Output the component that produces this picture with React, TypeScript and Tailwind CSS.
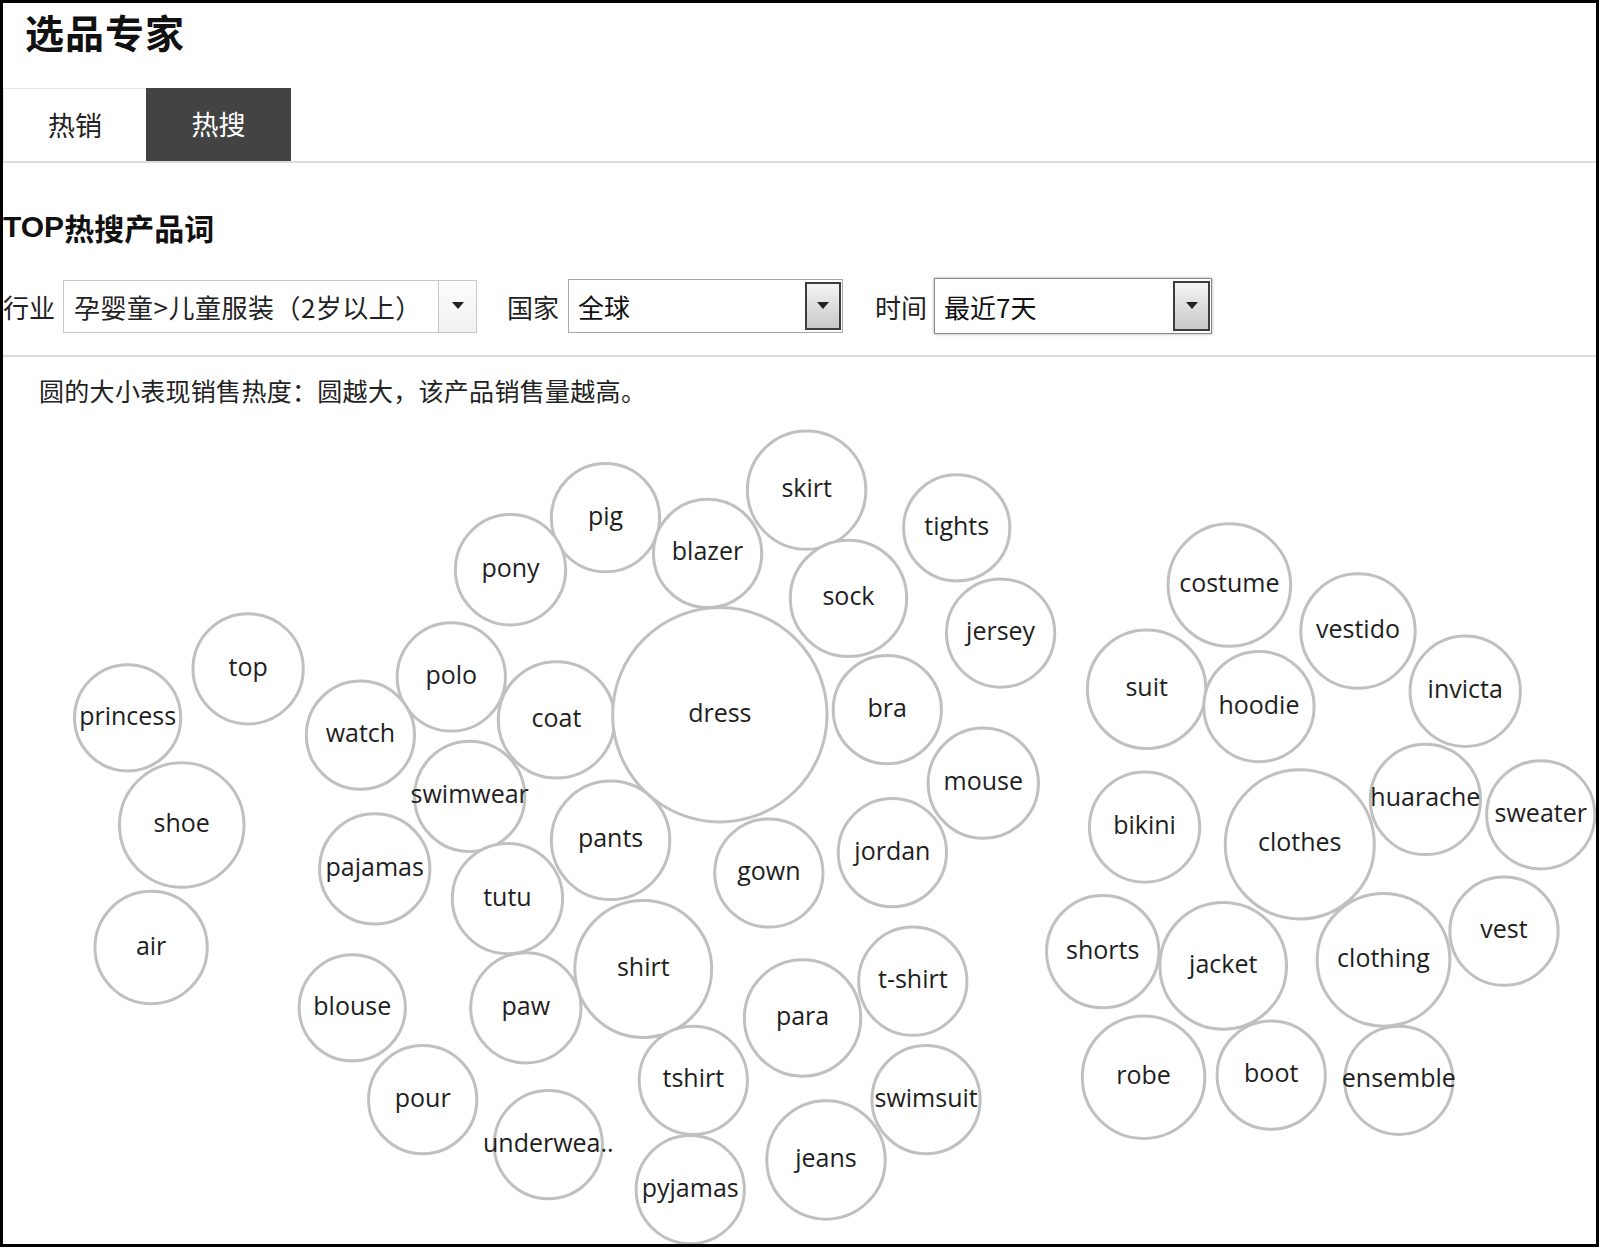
import React from "react";

const S = 1601 / 1568;

const bubbles: [string, number, number, number][] = [
  ["skirt", 790, 480, 58],
  ["tights", 937, 517, 52],
  ["pig", 593, 507, 53],
  ["blazer", 693, 542, 53],
  ["pony", 500, 558, 54],
  ["sock", 831, 586, 57],
  ["jersey", 980, 620, 53],
  ["costume", 1204, 573, 60],
  ["vestido", 1330, 618, 56],
  ["invicta", 1435, 677, 54],
  ["top", 243, 655, 54],
  ["princess", 125, 703, 52],
  ["polo", 442, 663, 53],
  ["watch", 353, 720, 53],
  ["coat", 545, 705, 57],
  ["dress", 705, 700, 105],
  ["bra", 869, 695, 53],
  ["suit", 1123, 675, 58],
  ["hoodie", 1233, 692, 54],
  ["mouse", 963, 767, 54],
  ["swimwear", 460, 780, 54],
  ["shoe", 178, 808, 61],
  ["pants", 598, 823, 58],
  ["gown", 753, 855, 53],
  ["jordan", 874, 835, 53],
  ["bikini", 1121, 810, 54],
  ["clothes", 1273, 827, 73],
  ["huarache", 1396, 783, 54],
  ["sweater", 1509, 798, 53],
  ["pajamas", 367, 851, 54],
  ["tutu", 497, 880, 54],
  ["air", 148, 928, 55],
  ["shirt", 630, 949, 67],
  ["t-shirt", 894, 961, 53],
  ["vest", 1473, 912, 53],
  ["shorts", 1080, 932, 55],
  ["jacket", 1198, 946, 62],
  ["clothing", 1355, 940, 65],
  ["blouse", 345, 987, 52],
  ["paw", 515, 987, 54],
  ["para", 786, 997, 57],
  ["pour", 414, 1077, 53],
  ["tshirt", 679, 1058, 53],
  ["swimsuit", 907, 1077, 53],
  ["robe", 1120, 1055, 60],
  ["boot", 1245, 1053, 53],
  ["ensemble", 1370, 1058, 53],
  ["underwea..", 537, 1121, 53],
  ["jeans", 809, 1136, 58],
  ["pyjamas", 676, 1165, 53],
];

const cjk = "font-['Noto_Sans_CJK_SC','Noto_Sans',sans-serif]";

function Arrow() {
  return (
    <svg width="12" height="8" viewBox="0 0 12 8">
      <path d="M0 0 L12 0 L6 7 Z" fill="#222" />
    </svg>
  );
}

export default function App() {
  return (
    <div className="w-[1601px] h-[1249px] bg-white">
      <div
        className={`w-[1599px] h-[1247px] border-[3px] border-black bg-white overflow-hidden text-[#222] ${cjk}`}
      >
        {/* title */}
        <div className="h-[85px] pl-[22px] pt-[8px]">
          <div className="text-[39px] leading-[40px] font-bold tracking-[1px] text-[#111]">选品专家</div>
        </div>

        {/* tabs */}
        <div className="flex h-[75px] border-b-2 border-[#dcdcdc]">
          <div className="w-[143px] h-[73px] flex items-center justify-center text-[27px] text-[#222] border-t border-l border-[#e6e6e6]">
            热销
          </div>
          <div className="w-[145px] h-[73px] flex items-center justify-center text-[27px] text-white bg-[#434343]">
            热搜
          </div>
        </div>

        {/* section title */}
        <div className="mt-[44px] h-[40px] flex items-center text-[30px] font-bold text-[#111] leading-none">
          <span className="font-['Liberation_Sans',sans-serif]">TOP</span>
          <span>热搜产品词</span>
        </div>

        {/* filters */}
        <div className="mt-[31px] h-[56px] flex items-center text-[26px]">
          <span className="text-[#222] w-[60px]">行业</span>
          <div className="w-[414px] h-[53px] border border-[#c8c8c8] flex bg-white">
            <div className="flex-1 flex items-center pl-[10px] text-[26px] tracking-[0.5px] text-[#222]">
              孕婴童&gt;儿童服装（2岁以上）
            </div>
            <div className="w-[38px] border-l border-[#c8c8c8] bg-gradient-to-b from-[#fdfdfd] to-[#f0f0f0] flex items-center justify-center">
              <Arrow />
            </div>
          </div>

          <span className="ml-[30px] w-[61px] text-[#222]">国家</span>
          <div className="w-[275px] h-[54px] border border-[#a8a8a8] flex bg-white">
            <div className="flex-1 flex items-center pl-[9px] text-[26px] text-[#111]">全球</div>
            <div className="w-[36px] my-[2px] mr-[1px] border-2 border-[#3c3c3c] bg-gradient-to-b from-[#f4f4f4] to-[#c8c8c8] flex items-center justify-center">
              <Arrow />
            </div>
          </div>

          <span className="ml-[32px] w-[59px] text-[#222]">时间</span>
          <div className="w-[278px] h-[56px] border border-[#888] shadow-[0_0_3px_rgba(0,0,0,0.35)] flex bg-white">
            <div className="flex-1 flex items-center pl-[9px] text-[26px] text-[#111]">最近7天</div>
            <div className="w-[37px] my-[2px] mr-[1px] border-2 border-[#3c3c3c] bg-gradient-to-b from-[#f4f4f4] to-[#c8c8c8] flex items-center justify-center">
              <Arrow />
            </div>
          </div>
        </div>

        {/* divider */}
        <div className="mt-[21px] h-[2px] bg-[#dcdcdc]" />

        {/* description */}
        <div className="mt-[18px] h-[30px] pl-[36px] flex items-center text-[25px] tracking-[0.3px] text-[#222] leading-none">
          圆的大小表现销售热度：圆越大，该产品销售量越高。
        </div>

        {/* bubble chart */}
        <svg
          className="block"
          width={1593}
          height={839}
          viewBox="3 405 1593 839"
        >
          {bubbles.map(([t, x, y, r]) => (
            <circle
              key={"c" + t}
              cx={x * S}
              cy={y * S}
              r={r * S}
              fill="white"
              stroke="#c0c0c0"
              strokeWidth={3}
            />
          ))}
          {bubbles.map(([t, x, y]) => (
            <text
              key={"t" + t}
              x={x * S}
              y={y * S - 3}
              textAnchor="middle"
              dominantBaseline="central"
              fontFamily="'Open Sans', 'Noto Sans', sans-serif"
              fontSize={25}
              fill="#1e1e1e"
            >
              {t}
            </text>
          ))}
        </svg>
      </div>
    </div>
  );
}
